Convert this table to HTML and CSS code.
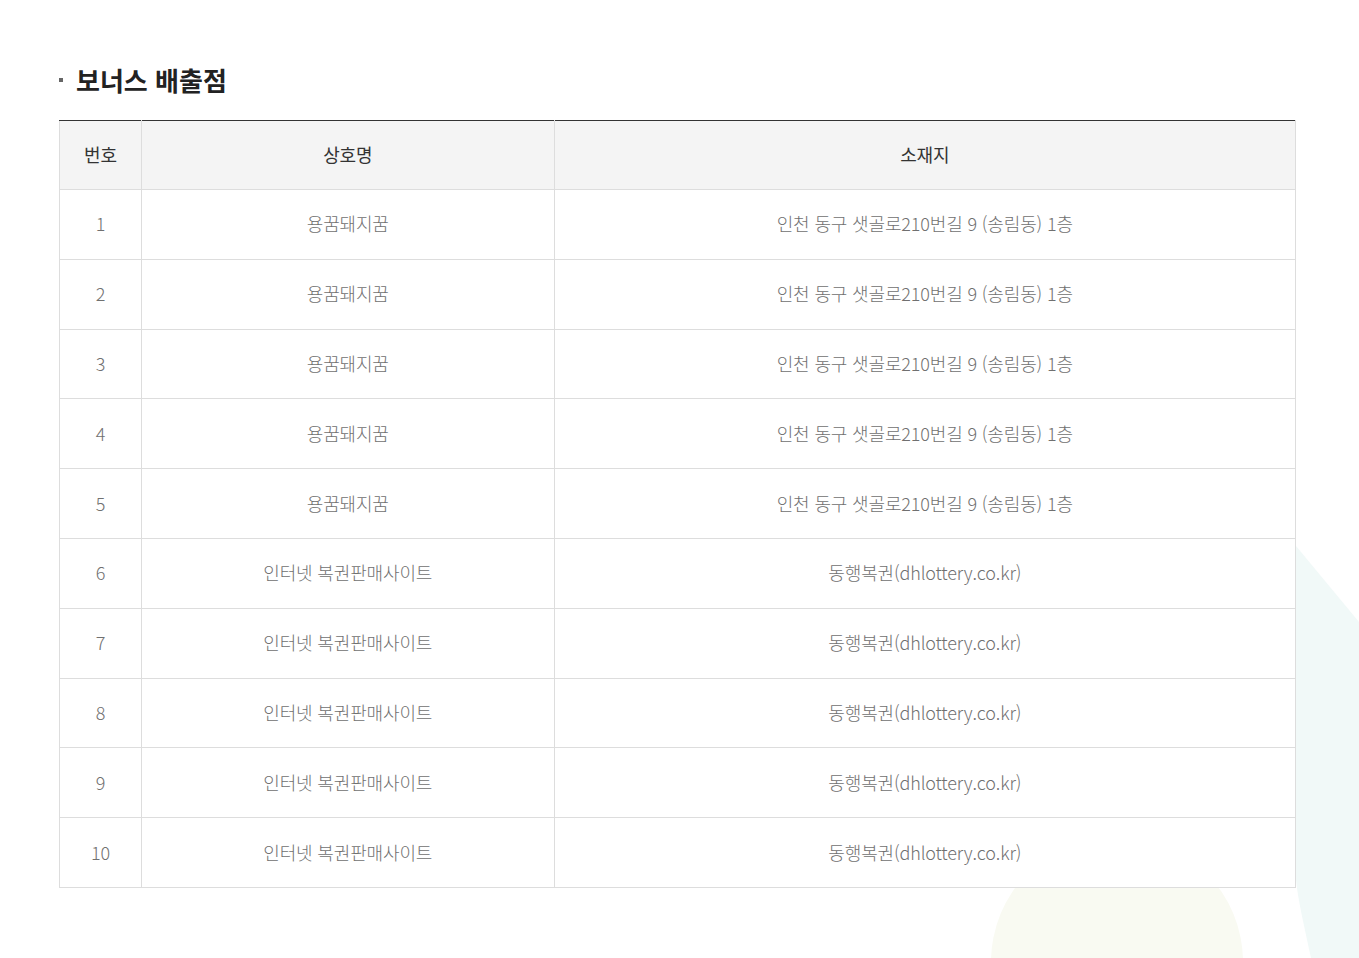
FILE: index.html
```html
<!DOCTYPE html>
<html lang="ko">
<head>
<meta charset="utf-8">
<title>보너스 배출점</title>
<link rel="stylesheet" href="styles.css">
</head>
<body>
<div class="page">
  <svg class="deco" width="1359" height="958" viewBox="0 0 1359 958" aria-hidden="true">
    <circle cx="1117" cy="962" r="126" fill="#f9faf2"/>
    <path d="M1296 546 L1359 622 L1359 958 L1311 958 C1304 925 1298 900 1296 880 Z" fill="#f1f9f8"/>
  </svg>
  <section class="content">
    <h2 class="title">보너스 배출점</h2>
    <table class="tbl">
      <colgroup>
        <col class="c1"><col class="c2"><col class="c3">
      </colgroup>
      <thead>
        <tr><th>번호</th><th>상호명</th><th>소재지</th></tr>
      </thead>
      <tbody>
        <tr><td>1</td><td>용꿈돼지꿈</td><td>인천 동구 샛골로210번길 9 (송림동) 1층</td></tr>
        <tr><td>2</td><td>용꿈돼지꿈</td><td>인천 동구 샛골로210번길 9 (송림동) 1층</td></tr>
        <tr><td>3</td><td>용꿈돼지꿈</td><td>인천 동구 샛골로210번길 9 (송림동) 1층</td></tr>
        <tr><td>4</td><td>용꿈돼지꿈</td><td>인천 동구 샛골로210번길 9 (송림동) 1층</td></tr>
        <tr><td>5</td><td>용꿈돼지꿈</td><td>인천 동구 샛골로210번길 9 (송림동) 1층</td></tr>
        <tr><td>6</td><td>인터넷 복권판매사이트</td><td>동행복권(dhlottery.co.kr)</td></tr>
        <tr><td>7</td><td>인터넷 복권판매사이트</td><td>동행복권(dhlottery.co.kr)</td></tr>
        <tr><td>8</td><td>인터넷 복권판매사이트</td><td>동행복권(dhlottery.co.kr)</td></tr>
        <tr><td>9</td><td>인터넷 복권판매사이트</td><td>동행복권(dhlottery.co.kr)</td></tr>
        <tr><td>10</td><td>인터넷 복권판매사이트</td><td>동행복권(dhlottery.co.kr)</td></tr>
      </tbody>
    </table>
  </section>
</div>
</body>
</html>
```
FILE: styles.css
```css
* { box-sizing: border-box; }
html, body { margin: 0; padding: 0; background: #fff; }
body {
  font-family: "Noto Sans CJK KR", "Noto Sans", sans-serif;
  color: #666;
}
.page {
  position: relative;
  width: 1359px;
  height: 958px;
  overflow: hidden;
}
.deco {
  position: absolute;
  left: 0;
  top: 0;
  z-index: 0;
}
.content {
  position: relative;
  z-index: 1;
  padding: 61px 0 0 59px;
}
.title {
  margin: 0 0 22px 0;
  padding-left: 17px;
  position: relative;
  font-size: 26px;
  font-weight: 700;
  line-height: 37px;
  color: #222;
  letter-spacing: 0;
}
.title::before {
  content: "";
  position: absolute;
  left: 0;
  top: 17px;
  width: 4px;
  height: 4px;
  background: #666;
}
.tbl {
  width: 1237px;
  border-collapse: collapse;
  background: #fff;
}
.tbl col.c1 { width: 82px; }
.tbl col.c2 { width: 413px; }
.tbl col.c3 { width: 742px; }
.tbl th, .tbl td {
  border: 1px solid #ddd;
  text-align: center;
  vertical-align: middle;
  padding: 0 0 2px 0;
  font-size: 18px;
  letter-spacing: -0.15px;
}
.tbl thead tr:first-child th { border-top: 1px solid #333; }
.tbl th {
  height: 69px;
  background: #f4f4f4;
  color: #333;
  font-weight: 400;
}
.tbl td {
  height: 69.8px;
  color: #707070;
  font-weight: 300;
}
```
